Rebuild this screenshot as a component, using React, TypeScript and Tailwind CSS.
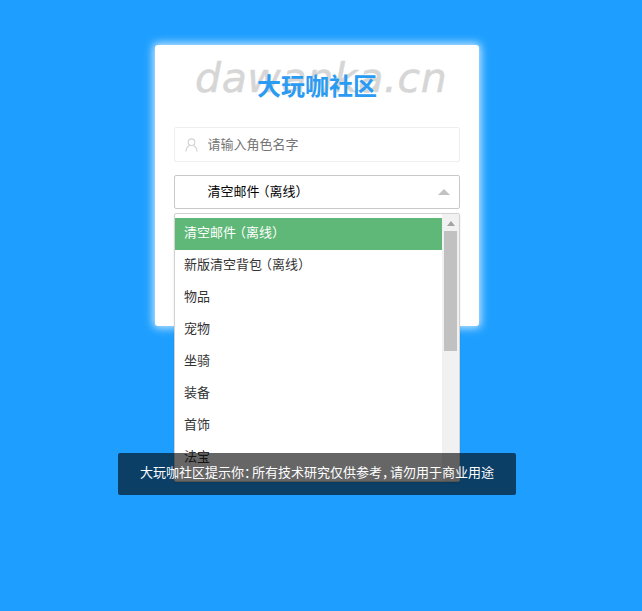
const font = "font-['Liberation_Sans','Noto_Sans_CJK_SC',sans-serif]";

function NarrowComma({ children }: { children: string }) {
  return <span className="tracking-[-5px]">{children}</span>;
}

function Tight({ children }: { children: string }) {
  return <span className="tracking-[-3px]">{children}</span>;
}

function UserIcon() {
  return (
    <svg width="13" height="14" viewBox="0 0 13 14" fill="none" stroke="#d2d2d2" strokeWidth="1.1">
      <circle cx="6.5" cy="4.2" r="3.3" />
      <path d="M1 13.5c0-3 1.5-5 3.6-6M12 13.5c0-3-1.5-5-3.6-6" />
    </svg>
  );
}

function Item({ active, children }: { active?: boolean; children: React.ReactNode }) {
  return (
    <li className={`h-[32px] pl-[9px] leading-[30px] ${active ? "bg-[#5fb878] text-white" : "text-[#333]"}`}>
      {children}
    </li>
  );
}

export default function App() {
  return (
    <div className={`relative h-[611px] w-[642px] overflow-hidden bg-[#1e9fff] text-[13px] ${font}`}>
      <div className="ml-[155px] w-[324px] pt-[45px]">
        <div className="h-[281px] rounded-[3px] bg-white px-[19px] shadow-[0_0_8px_2px_rgba(255,255,255,0.75)]">
          <div className="relative flex h-[82px] items-start justify-center">
            <span className="absolute left-[21px] top-[7px] whitespace-nowrap font-['DejaVu_Sans',sans-serif] text-[41px] italic leading-[52px] tracking-[0.6px] text-[#d6d6d6] [-webkit-text-stroke:0.5px_#d6d6d6]">
              dawanka.cn
            </span>
            <h1 className="relative pt-[26px] text-[24px] font-bold leading-[32px] text-[#2a9bf2]">大玩咖社区</h1>
          </div>
          <div className="flex h-[35px] items-center rounded-[2px] border border-[#eeeeee] bg-white">
            <span className="flex w-[32.5px] justify-center pl-[1px]"><UserIcon /></span>
            <input
              readOnly
              placeholder="请输入角色名字"
              className="min-w-0 flex-1 text-[13px] text-[#333] outline-none placeholder:text-[#757575]"
            />
          </div>
          <div className="mt-[13px] flex h-[34px] items-center justify-between rounded-[2px] border border-[#c9c9c9] bg-white pl-[32.5px] pr-[9px] text-black">
            <span>清空邮<Tight>件</Tight>（离线）</span>
            <span className="h-0 w-0 border-x-[6px] border-b-[6px] border-x-transparent border-b-[#c2c2c2]" />
          </div>
        </div>
      </div>

      <div className="absolute left-[174px] top-[213px] flex h-[269px] w-[286px] overflow-hidden rounded-[2px] border border-[#d2d2d2] bg-white pt-[4px] shadow-[0_1px_2px_rgba(0,0,0,0.12)]">
        <ul className="min-w-0 flex-1">
          <Item active>清空邮<Tight>件</Tight>（离线）</Item>
          <Item>新版清空背<Tight>包</Tight>（离线）</Item>
          <Item>物品</Item>
          <Item>宠物</Item>
          <Item>坐骑</Item>
          <Item>装备</Item>
          <Item>首饰</Item>
          <Item>法宝</Item>
        </ul>
        <div className="-mt-[4px] flex w-[17px] flex-col items-center bg-[#f1f1f1]">
          <span className="mt-[7px] h-0 w-0 border-x-[4px] border-b-[5px] border-x-transparent border-b-[#a3a3a3]" />
          <span className="mt-[5px] h-[120px] w-[13px] bg-[#c1c1c1]" />
        </div>
      </div>

      <div className="absolute left-[118px] top-[453px] flex h-[42px] w-[398px] items-center justify-center rounded-[2px] bg-black/60 pb-[2px] text-[13px] text-white">
        <span>
          大玩咖社区提示你<NarrowComma>：</NarrowComma>所有技术研究仅供参考<NarrowComma>，</NarrowComma>请勿用于商业用途
        </span>
      </div>
    </div>
  );
}
